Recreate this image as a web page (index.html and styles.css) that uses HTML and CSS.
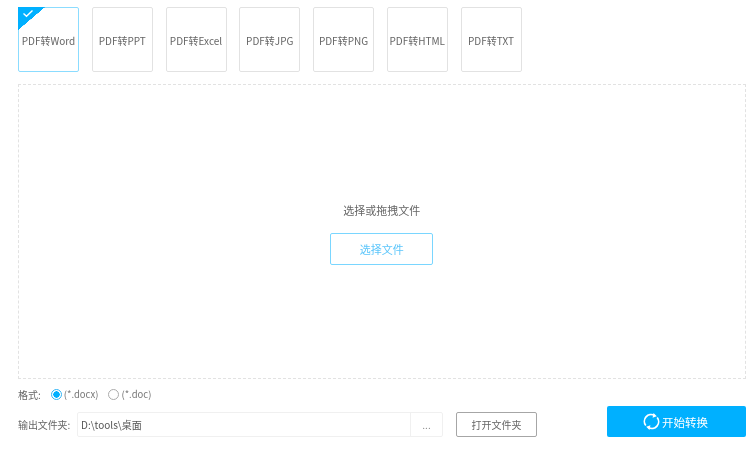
FILE: index.html
```html
<!DOCTYPE html>
<html lang="zh">
<head>
<meta charset="utf-8">
<title>PDF转换</title>
<link rel="stylesheet" href="styles.css">
</head>
<body>
<main class="app">
  <nav class="tabs">
    <div class="tab tab-active">
      <span class="corner"><svg class="check" width="12" height="9" viewBox="0 0 12 9"><path d="M1.5 4.5 L4.5 7.2 L10.5 1.5" fill="none" stroke="#fff" stroke-width="1.4"/></svg></span>
      PDF转Word
    </div>
    <div class="tab">PDF转PPT</div>
    <div class="tab">PDF转Excel</div>
    <div class="tab">PDF转JPG</div>
    <div class="tab">PDF转PNG</div>
    <div class="tab">PDF转HTML</div>
    <div class="tab">PDF转TXT</div>
  </nav>
  <section class="drop">
    <p class="drop-text">选择或拖拽文件</p>
    <button class="pick">选择文件</button>
  </section>
  <section class="bottom">
    <div class="options">
      <div class="format">
        <span class="label">格式:</span>
        <span class="radio radio-on"></span><span class="radio-text">(*.docx)</span>
        <span class="radio"></span><span class="radio-text">(*.doc)</span>
      </div>
      <div class="output">
        <span class="label label-out">输出文件夹:</span>
        <div class="path"><span class="path-value">D:\tools\桌面</span><span class="browse">...</span></div>
        <button class="open">打开文件夹</button>
      </div>
    </div>
    <button class="start">
      <svg class="spin" width="17" height="17" viewBox="0 0 17 17"><path d="M2.8 12.5 A6.8 6.8 0 0 1 11.5 2.4" fill="none" stroke="#fff" stroke-width="1.7"/><path d="M14.2 4.5 A6.8 6.8 0 0 1 5.5 14.6" fill="none" stroke="#fff" stroke-width="1.7"/><path d="M10.5 0 L13.8 3.2 L9.6 4.8 Z M6.5 17 L3.2 13.8 L7.4 12.2 Z" fill="#fff"/></svg>
      开始转换
    </button>
  </section>
</main>
</body>
</html>
```
FILE: styles.css
```css
* { box-sizing: border-box; }
html, body { margin: 0; background: #fff; }
body {
  width: 751px;
  height: 455px;
  overflow: hidden;
  font-family: "Noto Sans CJK SC", "Noto Sans", sans-serif;
  color: #666;
  font-size: 10px;
}
.app {
  padding: 7px 5.5px 0 18px;
  filter: blur(0.4px);
}
.tabs { display: flex; gap: 12.75px; }
.tab {
  position: relative;
  width: 61px;
  height: 65px;
  border: 1.5px solid #e2e2e2;
  border-radius: 2px;
  display: flex;
  align-items: center;
  justify-content: center;
  padding-top: 2px;
  white-space: nowrap;
  font-size: 10px;
  line-height: 14px;
  color: #666;
}
.tab-active { border-color: #8bdcff; }
.corner {
  position: absolute;
  left: -1px;
  top: -1px;
  width: 27px;
  height: 23px;
  background: linear-gradient(to bottom right, #00b0ff 50%, transparent 50.5%);
}
.check { position: absolute; left: 4px; top: 2px; }
.drop {
  margin-top: 12px;
  height: 295px;
  border: 1px dashed #e2e2e2;
  display: flex;
  flex-direction: column;
  align-items: center;
  padding-top: 118px;
}
.drop-text { margin: 0 0 15px; font-size: 11px; line-height: 15px; color: #666; }
.pick {
  width: 103px;
  height: 32px;
  background: #fff;
  border: 1.5px solid #7ad6ff;
  border-radius: 2px;
  color: #5cc6fb;
  font: inherit;
  font-size: 11px;
}
.bottom {
  display: flex;
  justify-content: space-between;
  align-items: flex-start;
}
.format {
  display: flex;
  align-items: center;
  height: 14px;
  margin-top: 8px;
}
.label { color: #666; font-size: 10px; }
.radio {
  width: 11px;
  height: 11px;
  border: 1px solid #aaa;
  border-radius: 50%;
  margin-left: 10px;
}
.radio + .radio-text + .radio { margin-left: 10px; }
.radio-on {
  border-color: #2fb4f5;
  background: radial-gradient(circle, #00b0ff 3px, #fff 3.4px);
}
.radio-text { margin-left: 2px; font-size: 9.5px; color: #777; }
.output {
  display: flex;
  align-items: center;
  margin-top: 11px;
}
.label-out { width: 59px; letter-spacing: -0.1px; }
.path {
  display: flex;
  width: 366px;
  height: 25px;
  border: 1px solid #f0f0f0;
  border-radius: 2px;
  font-size: 10px;
  line-height: 23px;
}
.path-value { flex: 1; padding-left: 3px; color: #555; }
.browse { width: 32px; border-left: 1px solid #f0f0f0; text-align: center; color: #888; }
.open {
  margin-left: 13px;
  width: 81px;
  height: 25px;
  background: #fff;
  border: 1.5px solid #a6a6a6;
  border-radius: 2px;
  font: inherit;
  font-size: 10px;
  color: #666;
}
.start {
  margin-top: 27px;
  width: 139px;
  height: 31px;
  background: #00b0ff;
  border: 0;
  border-radius: 2px;
  color: #fff;
  font: inherit;
  font-size: 11.5px;
  display: flex;
  align-items: center;
  justify-content: center;
  gap: 2px;
  padding-right: 7px;
}
```
